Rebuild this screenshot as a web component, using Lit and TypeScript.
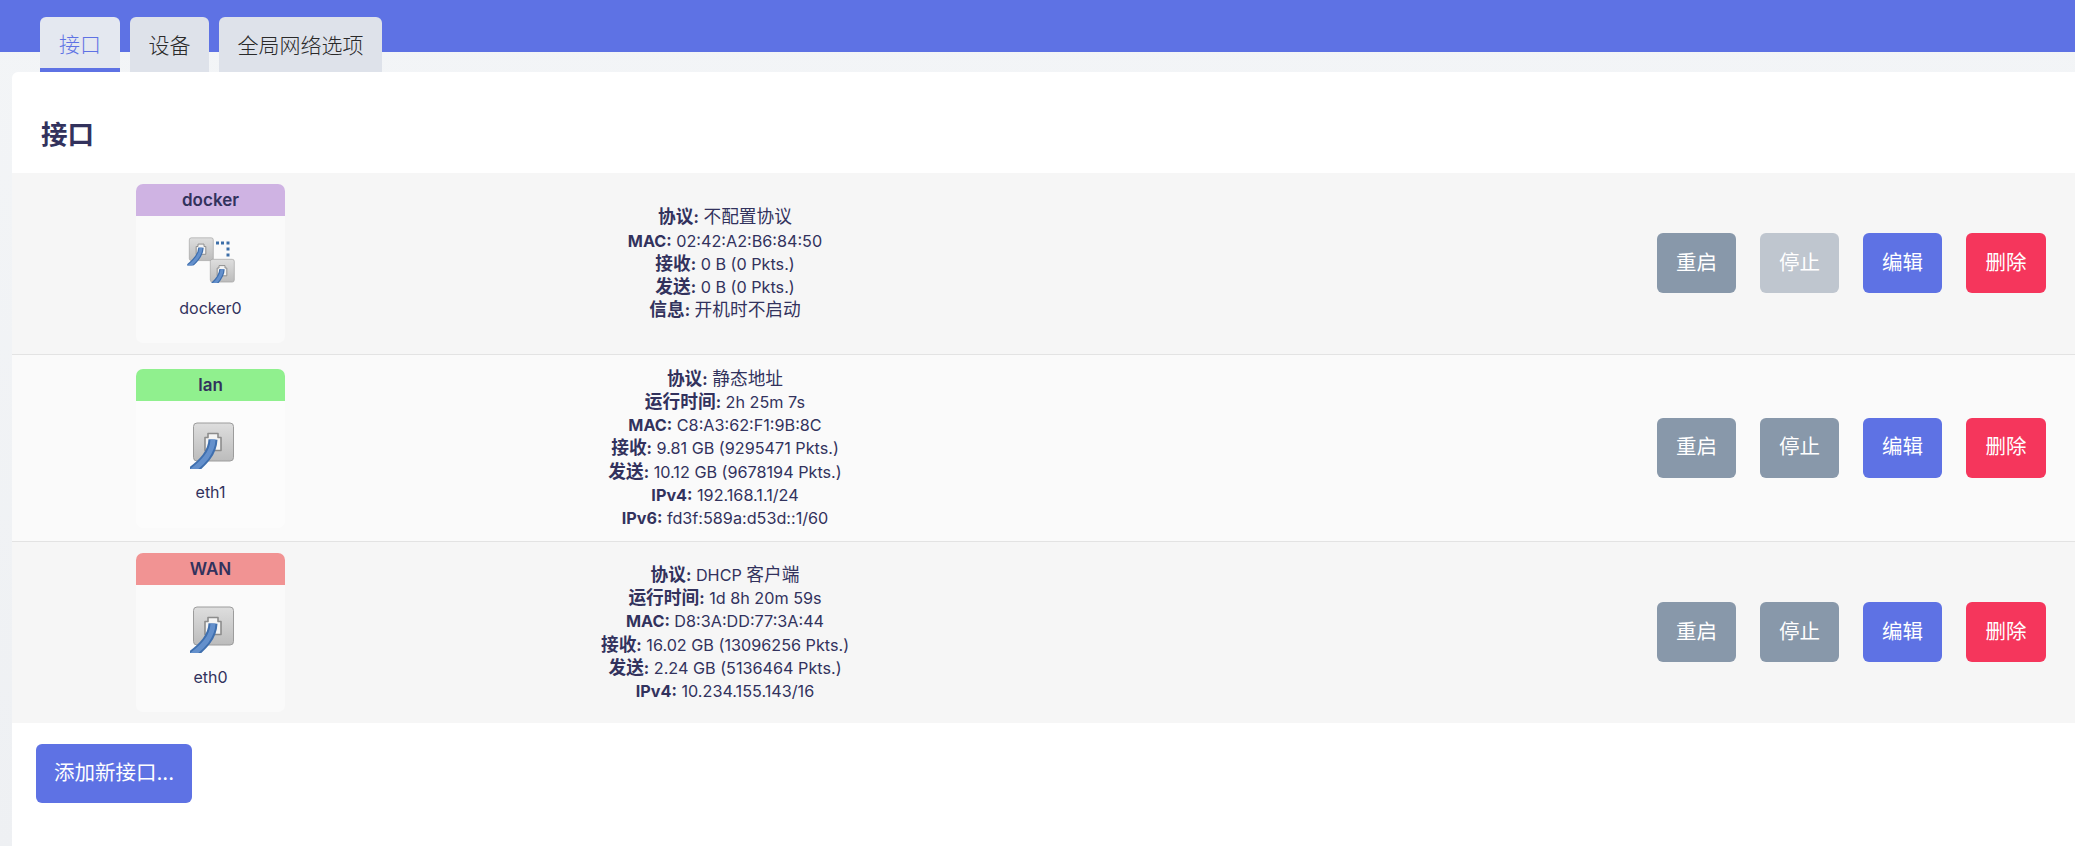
import { LitElement, html, css, svg } from "lit";
import { customElement } from "lit/decorators.js";

type Row = {
  name: string; color: string; dev: string; bridge: boolean; stopDisabled: boolean;
  info: [string, string][];
};

const ROWS: Row[] = [
  { name: "docker", color: "#cfb3e3", dev: "docker0", bridge: true, stopDisabled: true, info: [
    ["协议", "不配置协议"], ["MAC", "02:42:A2:B6:84:50"], ["接收", "0 B (0 Pkts.)"], ["发送", "0 B (0 Pkts.)"], ["信息", "开机时不启动"],
  ] },
  { name: "lan", color: "#90f08e", dev: "eth1", bridge: false, stopDisabled: false, info: [
    ["协议", "静态地址"], ["运行时间", "2h 25m 7s"], ["MAC", "C8:A3:62:F1:9B:8C"], ["接收", "9.81 GB (9295471 Pkts.)"], ["发送", "10.12 GB (9678194 Pkts.)"], ["IPv4", "192.168.1.1/24"], ["IPv6", "fd3f:589a:d53d::1/60"],
  ] },
  { name: "WAN", color: "#f19393", dev: "eth0", bridge: false, stopDisabled: false, info: [
    ["协议", "DHCP 客户端"], ["运行时间", "1d 8h 20m 59s"], ["MAC", "D8:3A:DD:77:3A:44"], ["接收", "16.02 GB (13096256 Pkts.)"], ["发送", "2.24 GB (5136464 Pkts.)"], ["IPv4", "10.234.155.143/16"],
  ] },
];

const mixed = (s: string) =>
  s.split(/([\u4e00-\u9fff]+)/).map((p, i) => (i % 2 ? html`<span class="cjk">${p}</span>` : p));

const port = (x: number, y: number, s: number, cut: number) => svg`
  <g transform="translate(${x} ${y}) scale(${s})">
    <rect x="0.5" y="0.5" width="40" height="38" rx="3.5" fill="url(#pg)" stroke="#9c9c9c"/>
    <path d="M12 28 V15 h3 v-4 h10 v4 h3 V28 Z" fill="#f4f4f4" stroke="#8c8c8c" stroke-width="1.6" stroke-linejoin="round"/>
    <g clip-path=${cut === 46 ? "url(#cut46)" : "url(#cut40)"}>
      <path d="M20 17 C19.5 30 11 40 -6 52" fill="none" stroke="#3f6fae" stroke-width="9"/>
      <path d="M20 17 C19.5 30 11 40 -6 52" fill="none" stroke="#6490cc" stroke-width="5"/>
    </g>
  </g>`;

const icon = (bridge: boolean) => svg`
  <svg class="icon" viewBox="0 0 48 52" width="48" height="52">
    <defs>
      <linearGradient id="pg" x1="0" y1="0" x2="0" y2="1">
        <stop offset="0" stop-color="#dedede"/><stop offset="1" stop-color="#bcbcbc"/>
      </linearGradient>
      <clipPath id="cut46"><rect x="-3" y="-5" width="60" height="51.5"/></clipPath>
      <clipPath id="cut40"><rect x="-3" y="-5" width="60" height="45"/></clipPath>
    </defs>
    ${bridge
      ? svg`${port(2, 4.5, 0.6, 46)}${port(23, 26, 0.6, 40)}
        <g fill="#3c6ea8">
          <rect x="29" y="8.5" width="3" height="3"/><rect x="34" y="8.5" width="3" height="3"/><rect x="39.5" y="8.5" width="3" height="3"/>
          <rect x="39.5" y="14.5" width="3" height="3"/><rect x="39.5" y="20.5" width="3" height="3"/>
        </g>`
      : port(6, 4.5, 1, 46)}
  </svg>`;

@customElement("app-root")
export class AppRoot extends LitElement {
  static styles = css`
    :host {
      display: block;
      width: 100%;
      min-height: 846px;
      font-family: "Inter", "Noto Sans CJK SC", sans-serif;
      color: #32325d;
      background: linear-gradient(#f3f5f7, #eef0f3);
    }
    .top { height: 52px; background: #5e72e4; }
    .tabs {
      display: flex;
      gap: 10px;
      margin-top: -35px;
      padding-left: 40px;
      height: 55px;
    }
    .tab {
      box-sizing: border-box;
      height: 55px;
      padding: 0 18.5px 2px;
      display: flex;
      align-items: center;
      justify-content: center;
      background: #dee2ea;
      border-radius: 6px 6px 0 0;
      color: #2a2a2a;
      font-size: 21px;
      font-weight: 300;
    }
    .tab.active {
      background: #e4e8f0;
      color: #5e72e4;
      border-bottom: 4px solid #5e72e4;
      padding: 0 19px;
    }
    .card {
      margin-left: 12px;
      background: #fff;
      border-radius: 6px 0 0 6px;
    }
    h3 {
      margin: 0;
      padding: 20px 0 0 29px;
      height: 101px;
      box-sizing: border-box;
      display: flex;
      align-items: center;
      font-size: 26.5px;
      font-weight: 700;
      color: #32325d;
    }
    .row {
      display: grid;
      grid-template-columns: 124px 149px 880px 1fr;
      align-items: center;
      box-sizing: border-box;
      background: #f6f6f6;
    }
    .row + .row { border-top: 1px solid #e3e3e3; }
    .row:nth-child(even) { background: #fafafa; }
    .r0 { height: 181px; }
    .r1 { height: 187px; }
    .r2 { height: 182px; }
    .block {
      grid-column: 2;
      height: 159px;
      background: #fafafa;
      border-radius: 7px;
      display: flex;
      flex-direction: column;
      align-items: center;
      overflow: hidden;
    }
    .row:nth-child(even) .block { background: #fcfcfc; }
    .badge {
      align-self: stretch;
      height: 32px;
      display: flex;
      align-items: center;
      justify-content: center;
      font-size: 17px;
      font-weight: 600;
      color: #32325d;
      flex: none;
    }
    .icon { margin-top: 17px; display: block; flex: none; }
    .dev { margin-top: 12.5px; font-size: 16px; color: #32325d; font-weight: 400; line-height: 20px; }
    .info {
      grid-column: 3;
      text-align: center;
      font-size: 16.2px;
      line-height: 23.2px;
      font-weight: 400;
      white-space: nowrap;
      padding-top: 2px;
    }
    .info b { font-weight: 700; }
    .cjk { font-size: 17.7px; line-height: 1; font-weight: 400; }
    .info b .cjk { font-weight: 700; }
    .actions {
      grid-column: 4;
      display: flex;
      justify-content: flex-end;
      gap: 24px;
      padding: 0 29px 1px 0;
    }
    button {
      font-family: inherit;
      width: 79px;
      height: 60px;
      border: 0;
      margin: 0;
      padding: 0 0 5px;
      border-radius: 6px;
      color: #fff;
      font-size: 20.5px;
      font-weight: 400;
    }
    .gray { background: #8898aa; }
    .off { background: #bfc6cf; }
    .blue { background: #5e72e4; }
    .red { background: #f5365c; width: 80px; }
    .foot { padding: 21px 0 0 24px; height: 112px; }
    .add { width: 156px; height: 59px; }
  `;

  render() {
    return html`
      <div class="top"></div>
      <div class="tabs">
        <div class="tab active">接口</div>
        <div class="tab">设备</div>
        <div class="tab">全局网络选项</div>
      </div>
      <div class="card">
        <h3>接口</h3>
        <div>
          ${ROWS.map((r, i) => html`
            <div class="row r${i}">
              <div class="block">
                <div class="badge" style="background:${r.color}">${r.name}</div>
                ${icon(r.bridge)}
                <div class="dev">${r.dev}</div>
              </div>
              <div class="info">
                ${r.info.map(([k, v]) => html`<div><b>${mixed(k)}:</b> ${mixed(v)}</div>`)}
              </div>
              <div class="actions">
                <button class="gray">重启</button>
                <button class=${r.stopDisabled ? "off" : "gray"}>停止</button>
                <button class="blue">编辑</button>
                <button class="red">删除</button>
              </div>
            </div>`)}
        </div>
        <div class="foot"><button class="blue add">添加新接口...</button></div>
      </div>
    `;
  }
}
